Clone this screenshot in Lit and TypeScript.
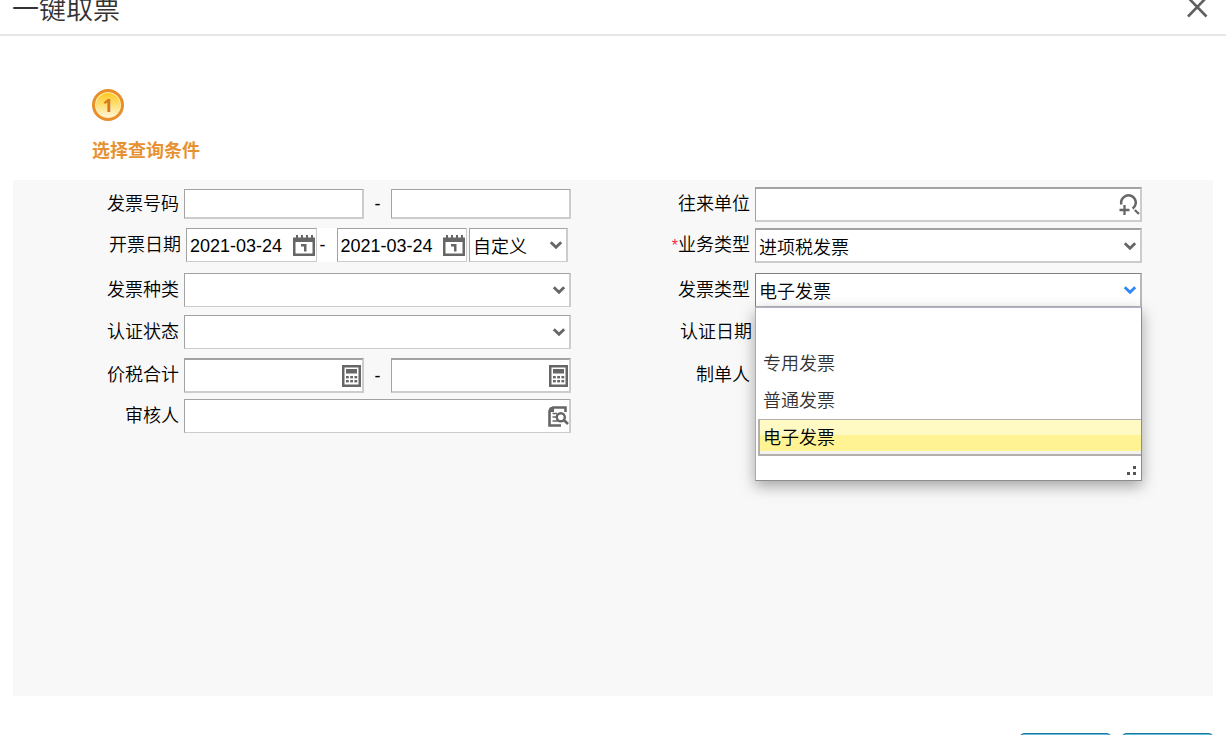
import { LitElement, html, css, svg } from "lit";
import { customElement, property, state } from "lit/decorators.js";
import { classMap } from "lit/directives/class-map.js";

const chevron = html`<svg class="chev" viewBox="0 0 14 10" aria-hidden="true">
  <path d="M1.8 2.2 7 7.2 12.2 2.2" fill="none" stroke="currentColor" stroke-width="2.8" />
</svg>`;

const calendar = html`<svg class="cal" viewBox="0 0 22 21" aria-hidden="true">
  <path
    fill="currentColor"
    fill-rule="evenodd"
    d="M0 2.500H3V0H5V2.500H8V0H10V2.500H13V0H15V2.500H18V0H20V2.500H22V21H0ZM2.500 7V18.500H19.500V7Z"
  />
  <path fill="currentColor" d="M8 9H13.500V16.500H11V11.500H8Z" />
</svg>`;

const calculator = html`<svg class="calc" viewBox="0 0 19 22" aria-hidden="true">
  <path fill="currentColor" fill-rule="evenodd" d="M0 0H19V22H0ZM2.500 2.500V19.500H16.500V2.500Z" />
  <rect x="4" y="4" width="11" height="4.500" fill="currentColor" />
  ${[11, 15].map((y) =>
    [4, 8.2, 12.4].map((x) => svg`<rect x=${x} y=${y} width="2.800" height="2.400" fill="currentColor" />`)
  )}
</svg>`;

const docSearch = html`<svg class="doc" viewBox="0 0 21 21" aria-hidden="true">
  <path d="M17.500 6V1.500H5L1.500 5V19.500H13" fill="none" stroke="currentColor" stroke-width="2.600" />
  <path d="M1 1H6V6H1Z" fill="currentColor" />
  <path d="M0 0H3.500L0 3.500Z" fill="#fff" />
  <path d="M4.500 7.500H9M4.500 11H8M4.500 15H10" stroke="currentColor" stroke-width="1.300" />
  <circle cx="12.800" cy="11.200" r="4" fill="#fff" stroke="currentColor" stroke-width="2.400" />
  <path d="M15.800 14 20 18" stroke="currentColor" stroke-width="2.600" />
</svg>`;

const addSearch = html`<svg class="add" viewBox="0 0 21 22" aria-hidden="true">
  <path
    d="M2.400 10.500A7.300 7.300 0 1 1 13.600 14.600"
    fill="none"
    stroke="currentColor"
    stroke-width="2.500"
  />
  <path d="M0.500 16H10.500M5.500 11V21M15.800 16 20 20" fill="none" stroke="currentColor" stroke-width="2.300" />
</svg>`;

@customElement("app-root")
export class AppRoot extends LitElement {
  @property() heading = "一键取票";
  @state() private invoiceType = "电子发票";
  @state() private open = true;

  private readonly types = ["", "专用发票", "普通发票", "电子发票"];

  static styles = css`
    :host {
      display: flex;
      flex-direction: column;
      height: 100vh;
      overflow: hidden;
      background: #fff;
      color: #000;
      font: 350 18px/24px "Liberation Sans", "Noto Sans CJK SC", sans-serif;
    }
    * {
      box-sizing: border-box;
    }
    .header {
      display: flex;
      justify-content: space-between;
      align-items: flex-start;
      height: 36px;
      flex: none;
      padding: 0 18px 0 12px;
      border-bottom: 2px solid #e6e6e6;
    }
    .title {
      margin: 0;
      font-size: 27px;
      font-weight: 350;
      line-height: 20px;
      color: #333;
    }
    .close {
      display: flex;
      border: 0;
      padding: 0;
      background: none;
      color: #606060;
    }
    .close svg {
      width: 21px;
      height: 18px;
    }
    .steps {
      flex: none;
      height: 144px;
      margin: 0;
      padding: 53px 92px 0;
      list-style: none;
    }
    .step {
      display: flex;
      flex-direction: column;
      align-items: flex-start;
      gap: 18px;
      color: #e79232;
      font-weight: 700;
    }
    .num {
      display: grid;
      place-items: center;
      width: 32px;
      height: 32px;
      border: 3px solid #e88f2c;
      border-radius: 50%;
      background: linear-gradient(#ffc61c, #ffdf76 50%, #fff6dc);
      box-shadow: inset 0 0 0 1px #fff0b8;
      color: #d9751a;
      font: 700 18px/24px "Noto Sans", sans-serif;
    }
    .panel {
      flex: 1;
      display: grid;
      grid-template-columns: 1fr 1fr;
      column-gap: 13px;
      margin: 0 13px;
      padding: 7px 71px 0 0;
      background: #f8f8f8;
    }
    .col {
      display: grid;
      grid-template-rows: 41px 45px 42px 43px 41px 34px;
      align-content: start;
    }
    .row {
      display: grid;
      grid-template-columns: 166px minmax(0, 1fr);
      column-gap: 5px;
      align-items: center;
      height: 34px;
    }
    .row.date {
      grid-template-columns: 168px minmax(0, 1fr);
    }
    .label {
      text-align: right;
      padding-bottom: 1px;
      white-space: nowrap;
    }
    .must {
      color: #f0284a;
      font-size: 16px;
    }
    .field {
      position: relative;
      display: flex;
      align-items: center;
      flex: 1;
      min-width: 0;
      height: 34px;
      background: #fff;
      border: solid;
      border-width: 1px 2px 1px 1px;
      border-color: #a2a2a2 #ccc #ccc #a2a2a2;
      color: #666;
    }
    .field.low {
      height: 30px;
      border-bottom-width: 2px;
    }
    .field.deep {
      height: 35px;
      border-top-width: 2px;
      border-bottom-width: 2px;
    }
    .field.active {
      border-color: #808080 #b8b8b8 #b8b8b8 #808080;
    }
    .field.active .chev {
      color: #2f86f6;
    }
    .input,
    .select {
      flex: 1;
      width: 100%;
      min-width: 0;
      height: 100%;
      margin: 0;
      padding: 2px 3px 0;
      border: 0;
      outline: 0;
      background: none;
      appearance: none;
      color: #000;
      font: inherit;
    }
    .select {
      padding-top: 4px;
    }
    .chev,
    .add,
    .doc,
    .calc,
    .cal {
      position: absolute;
      pointer-events: none;
    }
    .chev {
      right: 3px;
      width: 14px;
      height: 10px;
    }
    .calc {
      right: 1px;
      width: 19px;
      height: 22px;
    }
    .cal {
      right: 1px;
      width: 22px;
      height: 21px;
    }
    .doc {
      right: 0;
      width: 21px;
      height: 21px;
    }
    .add {
      right: 0;
      width: 21px;
      height: 22px;
    }
    .range {
      display: flex;
      align-items: center;
    }
    .dash {
      width: 27px;
      text-align: center;
    }
    .dates {
      display: flex;
      margin-right: 3px;
    }
    .dates .white {
      display: flex;
      align-items: center;
      flex: 1;
      background: #fff;
    }
    .dates .field {
      border-width: 1px;
    }
    .dates .dash {
      width: 20px;
      padding-left: 3px;
      text-align: left;
    }
    .dates .preset {
      flex: none;
      width: 99px;
      margin-left: 2px;
      border-width: 1px 2px 1px 1px;
    }
    .cell {
      position: relative;
    }
    .menu {
      position: absolute;
      z-index: 2;
      top: 100%;
      left: 0;
      right: 0;
      margin: 0;
      padding: 0 0 0 2px;
      list-style: none;
      background: #fff;
      border: 1px solid #8c8c8c;
      border-left-color: #a9a5cc;
      border-top-color: #b3b0cc;
      box-shadow: 0 5px 14px rgba(0, 0, 0, 0.35);
      color: #333;
    }
    .option {
      height: 37px;
      padding: 0 5px;
      line-height: 38px;
    }
    .option.on {
      padding: 0 3px;
      line-height: 37px;
      border: solid #b3afaf;
      border-width: 1px 0 2px 2px;
      background: linear-gradient(#fff9c4 45%, #fff394 45%, #fff394 91%, #f4f2ee 91%);
      color: #000;
    }
    .grip {
      display: flex;
      justify-content: flex-end;
      align-items: flex-end;
      height: 24px;
      padding: 0 4px 4px 0;
      color: #555;
    }
    .grip svg {
      width: 11px;
      height: 10px;
    }
    .footer {
      flex: none;
      display: flex;
      justify-content: flex-end;
      align-items: flex-start;
      gap: 11px;
      height: 39px;
      padding: 37px 13px 0;
      overflow: hidden;
    }
    .btn {
      flex: none;
      width: 91px;
      height: 36px;
      border: 1px solid #127aa4;
      border-radius: 4px;
      background: #6fb9d4;
    }
  `;

  private input(id: string, kind = "", icon: unknown = "", name = "") {
    return html`<div class="field ${kind}">
      <input class="input" id=${id} type="text" aria-label=${name} />${icon}
    </div>`;
  }

  private dates(id: string, value: string, name: string) {
    return html`<div class="dates">
      <div class="white">
        <div class="field">
          <input class="input" id=${id} type="text" .value=${value} aria-label=${name} />${calendar}
        </div>
        <span class="dash">-</span>
        <div class="field">
          <input class="input" type="text" .value=${value} aria-label=${name} />${calendar}
        </div>
      </div>
      <div class="field preset">
        <select class="select" aria-label=${name}>
          <option>自定义</option></select
        >${chevron}
      </div>
    </div>`;
  }

  private row(id: string, label: string, body: unknown, date = false, must = false) {
    return html`<div class=${classMap({ row: true, date })}>
      <label class="label" for=${id}>${must ? html`<span class="must">*</span>` : ""}${label}</label>
      ${body}
    </div>`;
  }

  private pick(type: string) {
    this.invoiceType = type;
    this.open = false;
  }

  render() {
    return html`
      <header class="header">
        <h1 class="title">${this.heading}</h1>
        <button class="close" aria-label="关闭">
          <svg viewBox="0 0 21 18"><path d="M1 -2.500 19.500 16.500M19.500 -2.500 1 16.500" stroke="currentColor" stroke-width="2.600" /></svg>
        </button>
      </header>
      <ol class="steps">
        <li class="step"><span class="num">1</span><span>选择查询条件</span></li>
      </ol>
      <form class="panel">
        <div class="col">
          ${this.row(
            "no",
            "发票号码",
            html`<div class="range">
              ${this.input("no", "low", "", "发票号码")}<span class="dash">-</span>${this.input("no2", "low", "", "发票号码")}
            </div>`
          )}
          ${this.row("issued", "开票日期", this.dates("issued", "2021-03-24", "开票日期"), true)}
          ${this.row(
            "kind",
            "发票种类",
            html`<div class="field"><select class="select" id="kind"><option></option></select>${chevron}</div>`
          )}
          ${this.row(
            "state",
            "认证状态",
            html`<div class="field"><select class="select" id="state"><option></option></select>${chevron}</div>`
          )}
          ${this.row(
            "sum",
            "价税合计",
            html`<div class="range">
              ${this.input("sum", "deep", calculator, "价税合计")}<span class="dash">-</span>${this.input("sum2", "deep", calculator, "价税合计")}
            </div>`
          )}
          ${this.row("auditor", "审核人", this.input("auditor", "", docSearch, "审核人"))}
        </div>
        <div class="col">
          ${this.row("party", "往来单位", this.input("party", "deep", addSearch, "往来单位"))}
          ${this.row(
            "biz",
            "业务类型",
            html`<div class="field deep"><select class="select" id="biz"><option>进项税发票</option></select>${chevron}</div>`,
            false,
            true
          )}
          ${this.row(
            "type",
            "发票类型",
            html`<div class="cell">
              <div class="field active" @click=${() => (this.open = !this.open)}>
                <select class="select" id="type">
                  ${this.types.map((t) => html`<option ?selected=${t === this.invoiceType}>${t}</option>`)}
                </select
                >${chevron}
              </div>
              ${this.open
                ? html`<ul class="menu" role="listbox">
                    ${this.types.map(
                      (t) => html`<li
                        class=${classMap({ option: true, on: t === this.invoiceType })}
                        role="option"
                        aria-selected=${t === this.invoiceType}
                        @click=${() => this.pick(t)}
                      >${t}</li>`
                    )}
                    <li class="grip" role="presentation">
                      <svg viewBox="0 0 11 10"><path d="M7 0h3v3H7zM7 6h3v3H7zM1 6h3v3H1z" fill="currentColor" /></svg>
                    </li>
                  </ul>`
                : ""}
            </div>`
          )}
          ${this.row("certified", "认证日期", this.dates("certified", "", "认证日期"), true)}
          ${this.row("maker", "制单人", this.input("maker", "", docSearch, "制单人"))}
        </div>
      </form>
      <footer class="footer">
        <button class="btn" aria-label="确定"></button>
        <button class="btn" aria-label="取消"></button>
      </footer>
    `;
  }
}
